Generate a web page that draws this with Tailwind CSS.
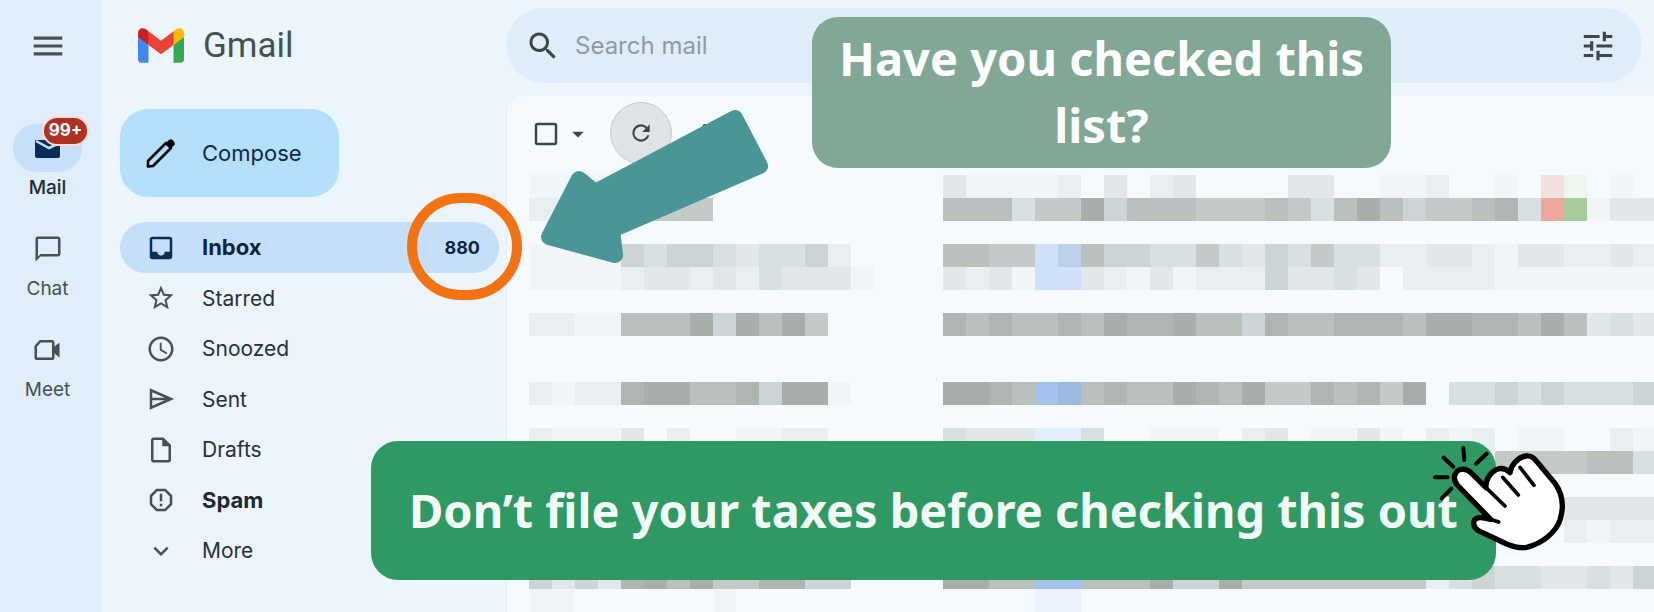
<!DOCTYPE html>
<html lang="en">
<head>
  <meta charset="UTF-8" />
  <title>Gmail</title>
  <script src="https://cdn.jsdelivr.net/npm/@tailwindcss/browser@4"></script>
</head>
<body class="w-[1654px] h-[612px] overflow-hidden bg-[#ecf4fc] font-['Inter',sans-serif] relative">
  <div class="flex h-full">
    <!-- App rail -->
    <aside class="w-[101px] shrink-0 bg-[#e0edfb] flex flex-col items-center pr-[6px]">
      <svg class="mt-[27px] mb-[59px] w-[38px] h-[38px] fill-[#46524f]" viewBox="0 0 24 24"><path d="M3 18h18v-2H3v2zm0-5h18v-2H3v2zm0-7v2h18V6H3z"/></svg>
      <div class="h-[101px] flex flex-col items-center">
        <div class="relative w-[69px] h-[48px] rounded-full bg-[#c6e0fb] flex items-center justify-center">
          <svg class="w-[25px] h-[20px]" viewBox="0 0 25 20"><path fill="#062e56" d="M0 2h25v16a2 2 0 0 1-2 2H2a2 2 0 0 1-2-2z"/><path fill="none" stroke="#c6e0fb" stroke-width="2.5" d="M1 3l13 7 11-5"/></svg>
          <span class="absolute left-[31px] top-[-6px] w-[43px] h-[26px] rounded-full bg-[#ab3224] ring-2 ring-[#f9dcd7] text-white text-[17px] font-bold flex items-center justify-center">99+</span>
        </div>
        <span class="mt-[2px] h-[28px] leading-[28px] text-[19px] font-medium text-[#1c2b33]">Mail</span>
      </div>
      <div class="h-[101px] flex flex-col items-center">
        <div class="h-[48px] flex items-center"><svg class="w-[30px] h-[30px] fill-[#46524f]" viewBox="0 0 24 24"><path d="M20 2H4c-1.100 0-2 .9-2 2v18l4-4h14c1.100 0 2-.9 2-2V4c0-1.100-.9-2-2-2zm0 14H6l-2 2V4h16v12z"/></svg></div>
        <span class="mt-[2px] h-[28px] leading-[28px] text-[19px] text-[#46524f]">Chat</span>
      </div>
      <div class="h-[101px] flex flex-col items-center">
        <div class="h-[48px] flex items-center"><svg class="w-[30px] h-[30px]" viewBox="0 0 24 24"><path fill="none" stroke="#46524f" stroke-width="2" stroke-linejoin="round" d="M6.500 5H16a1 1 0 0 1 1 1v12a1 1 0 0 1-1 1H4a1 1 0 0 1-1-1V9z"/><path fill="#46524f" d="M17 10l5-4v12l-5-4z"/></svg></div>
        <span class="mt-[2px] h-[28px] leading-[28px] text-[19px] text-[#46524f]">Meet</span>
      </div>
    </aside>

    <!-- Labels column -->
    <nav class="w-[405px] shrink-0 pl-[19px]">
      <div class="mt-[28px] ml-[18px] h-[35px] flex items-center gap-[19px]">
        <svg class="w-[46px] h-[35px]" viewBox="0 0 256 193">
          <path fill="#4285F4" d="M58.182 192.05V93.14L27.507 65.077 0 49.504v125.091c0 9.658 7.825 17.455 17.455 17.455h40.727Z"/>
          <path fill="#34A853" d="M197.818 192.05h40.727c9.659 0 17.455-7.826 17.455-17.455V49.505l-31.156 17.837-27.026 25.798v98.91Z"/>
          <path fill="#EA4335" d="m58.182 93.14-4.174-38.647 4.174-36.989L128 69.868l69.818-52.364 4.669 34.992-4.669 40.644L128 145.504z"/>
          <path fill="#FBBC04" d="M197.818 17.504V93.14L256 49.504V26.231c0-21.585-24.64-33.89-41.89-20.945l-16.292 12.218Z"/>
          <path fill="#C5221F" d="M0 49.504l26.759 20.07L58.182 93.14V17.504L41.89 5.286C24.61-7.66 0 4.646 0 26.23v23.273Z"/>
        </svg>
        <span class="text-[35px] text-[#46524f] leading-none font-['Roboto',sans-serif]">Gmail</span>
      </div>

      <button class="mt-[46px] w-[219px] h-[88px] rounded-[28px] bg-[#b4e0fd] flex items-center pl-[26px] gap-[26px]">
        <svg class="w-[30px] h-[30px]" viewBox="0 0 30 30"><path fill="none" stroke="#000" stroke-width="2.6" stroke-linejoin="round" d="M2 23L20 5l5 5L7 28l-5 .5z"/><path d="M20 5l3-3q2-1.500 4 .5l1 1q1.500 2 0 4l-3 2.500z"/></svg>
        <span class="text-[22px] text-[#0f2a3f]">Compose</span>
      </button>

      <ul class="mt-[25px] w-[379px] text-[21px] text-[#253238]">
        <li class="h-[51px] rounded-full bg-[#c5dffa] flex items-center pl-[26px] pr-[19px] gap-[26px] text-[22px] font-bold text-[#0a2540]">
          <svg class="w-[30px] h-[30px] fill-[#062e56]" viewBox="0 0 24 24"><path d="M19 3H5c-1.100 0-2 .9-2 2v14c0 1.100.9 2 2 2h14c1.100 0 2-.9 2-2V5c0-1.100-.9-2-2-2zm0 12h-4c0 1.660-1.340 3-3 3s-3-1.340-3-3H5V5h14v10z"/></svg>
          <span>Inbox</span>
          <span class="ml-auto text-[18px]">880</span>
        </li>
        <li class="h-[50.500px] flex items-center pl-[26px] gap-[26px]">
          <svg class="w-[30px] h-[30px] fill-[#46524f]" viewBox="0 0 24 24"><path d="M22 9.240l-7.190-.62L12 2 9.190 8.630 2 9.240l5.460 4.730L5.820 21 12 17.270 18.180 21l-1.630-7.030L22 9.240zM12 15.400l-3.760 2.270 1-4.280-3.320-2.880 4.380-.38L12 6.100l1.710 4.040 4.380.38-3.320 2.880 1 4.280L12 15.400z"/></svg>
          <span>Starred</span>
        </li>
        <li class="h-[50.500px] flex items-center pl-[26px] gap-[26px]">
          <svg class="w-[30px] h-[30px] fill-[#46524f]" viewBox="0 0 24 24"><path d="M11.990 2C6.470 2 2 6.480 2 12s4.470 10 9.990 10C17.520 22 22 17.520 22 12S17.520 2 11.990 2zM12 20c-4.420 0-8-3.580-8-8s3.580-8 8-8 8 3.580 8 8-3.580 8-8 8zm.5-13H11v6l5.250 3.150.75-1.230-4.500-2.670z"/></svg>
          <span>Snoozed</span>
        </li>
        <li class="h-[50.500px] flex items-center pl-[26px] gap-[26px]">
          <svg class="w-[30px] h-[30px]" viewBox="0 0 24 24"><path fill="none" stroke="#46524f" stroke-width="2" d="M4 5l16 7-16 7zM4 12h15"/></svg>
          <span>Sent</span>
        </li>
        <li class="h-[50.500px] flex items-center pl-[26px] gap-[26px]">
          <svg class="w-[30px] h-[30px] fill-[#46524f]" viewBox="0 0 24 24"><path d="M14 2H6c-1.100 0-2 .9-2 2v16c0 1.100.9 2 2 2h12c1.100 0 2-.9 2-2V8l-6-6zm4 18H6V4h7v5h5v11z"/></svg>
          <span>Drafts</span>
        </li>
        <li class="h-[50.500px] flex items-center pl-[26px] gap-[26px] text-[22px] font-bold text-[#1c2b33]">
          <svg class="w-[30px] h-[30px] fill-[#46524f]" viewBox="0 0 24 24"><path d="M15.730 3H8.270L3 8.270v7.460L8.270 21h7.460L21 15.730V8.270L15.730 3zM19 14.900L14.900 19H9.100L5 14.900V9.100L9.100 5h5.800L19 9.100v5.800z"/><path d="M11 7h2v6h-2zM11 15h2v2h-2z"/></svg>
          <span>Spam</span>
        </li>
        <li class="h-[50.500px] flex items-center pl-[26px] gap-[26px]">
          <svg class="w-[30px] h-[30px] fill-[#46524f]" viewBox="0 0 24 24"><path d="M7.410 8.590L12 13.170l4.590-4.580L18 10l-6 6-6-6 1.410-1.410z"/></svg>
          <span>More</span>
        </li>
      </ul>
    </nav>

    <!-- Main -->
    <main class="flex-1 min-w-0 flex flex-col">
      <div class="mt-[8px] h-[75px] w-[1136px] rounded-full bg-[#dfedfb] flex items-center pl-[19px] pr-[25px]">
        <svg class="w-[36px] h-[36px] fill-[#3c4846]" viewBox="0 0 24 24"><path d="M15.500 14h-.79l-.28-.27C15.410 12.590 16 11.110 16 9.500 16 5.910 13.090 3 9.500 3S3 5.910 3 9.500 5.910 16 9.500 16c1.610 0 3.090-.59 4.230-1.570l.27.28v.79l5 4.990L20.490 19l-4.990-5zm-6 0C7.010 14 5 11.990 5 9.500S7.010 5 9.500 5 14 7.010 14 9.500 11.990 14 9.500 14z"/></svg>
        <span class="ml-[14px] text-[24px] text-[#8e9ba0]">Search mail</span>
        <svg class="ml-auto w-[38px] h-[38px] fill-[#3c4846]" viewBox="0 0 24 24"><path d="M3 17v2h6v-2H3zM3 5v2h10V5H3zm10 16v-2h8v-2h-8v-2h-2v6h2zM7 9v2H3v2h4v2h2V9H7zm14 4v-2H11v2h10zm-6-4h2V7h4V5h-4V3h-2v6z"/></svg>
      </div>

      <section class="mt-[13px] flex-1 min-h-0 rounded-tl-2xl bg-[#f5fafe] border-l border-[#e6eef4] pl-[22px] overflow-hidden">
        <div class="h-[79px] flex items-center ml-[3px]">
          <svg class="w-[30px] h-[30px] -ml-[1px] mt-[-4px] fill-[#3c4846]" viewBox="0 0 24 24"><path d="M19 5v14H5V5h14m0-2H5c-1.100 0-2 .9-2 2v14c0 1.100.9 2 2 2h14c1.100 0 2-.9 2-2V5c0-1.100-.9-2-2-2z"/></svg>
          <svg class="ml-[3px] mt-[-4px] w-[28px] h-[28px] fill-[#3c4846]" viewBox="0 0 24 24"><path d="M7 10l5 5 5-5z"/></svg>
          <div class="ml-[18px] mt-[-5px] w-[62px] h-[62px] rounded-full bg-[#e0e4e6] border border-[#c4cbcc] flex items-center justify-center">
            <svg class="w-[26px] h-[26px] fill-[#3c4846]" viewBox="0 0 24 24"><path d="M17.650 6.350A7.958 7.958 0 0 0 12 4a8 8 0 1 0 7.730 10h-2.080A6 6 0 1 1 12 6c1.660 0 3.140.69 4.220 1.780L13 11h7V4l-2.350 2.350z"/></svg>
          </div>
          <svg class="ml-[18px] mt-[-4px] w-[30px] h-[30px] fill-[#3c4846]" viewBox="0 0 24 24"><circle cx="12" cy="6" r="2"/><circle cx="12" cy="12" r="2"/><circle cx="12" cy="18" r="2"/></svg>
        </div>
        <!-- pixelated message rows, filled in below -->
        <div id="mosaic" class="grid grid-cols-[repeat(49,23px)] auto-rows-[23px]"></div>
      </section>
    </main>
  </div>

  <!-- Overlays on top of the screenshot -->
  <div class="absolute left-[407px] top-[193px] w-[115px] h-[107px] rounded-full border-[10px] border-[#f37313]"></div>

  <svg class="absolute left-[530px] top-[100px] w-[250px] h-[170px]" viewBox="530 100 250 170">
    <path fill="#4a9596" stroke="#4a9596" stroke-width="16" stroke-linejoin="round" d="M579 179L595 192 735 118 760 166 612 230 615 255 549 237Z"/>
  </svg>

  <div class="absolute left-[812px] top-[17px] w-[579px] h-[151px] rounded-[26px] bg-[#81a895] text-white text-center text-[47px] leading-[67px] font-bold font-['Noto_Sans',sans-serif] pt-[8px] px-[20px]">Have you checked this list?</div>

  <div class="absolute left-[371px] top-[441px] w-[1125px] h-[139px] rounded-[27px] bg-[#2e9963] text-[#f2fbf6] text-[46.900px] font-bold font-['Noto_Sans',sans-serif] flex items-center pl-[38px] whitespace-nowrap">Don’t file your taxes before checking this out</div>

  <svg class="absolute left-[1400px] top-[420px] w-[190px] h-[140px]" viewBox="0 0 570 420">
    <path fill="#fff" stroke="#000" stroke-width="16" stroke-linejoin="round" d="M272 298L172 195C155 175 165 150 185 148C197 146 207 152 215 160L258 203C256 180 272 152 298 146C312 144 322 150 330 158C332 138 352 112 378 108C392 106 402 114 410 124L465 190C488 222 492 262 480 300C468 335 430 370 380 382C360 386 340 380 320 372L235 332C218 322 216 300 232 294C244 290 258 294 272 298Z"/>
    <path fill="none" stroke="#000" stroke-width="11" stroke-linecap="round" d="M258 203L315 258M308 172L355 225M360 142L402 196M272 298L296 306"/>
    <path fill="none" stroke="#000" stroke-width="12" stroke-linecap="round" d="M190 84l3 36M131 113l29 27M105 172h38M125 235l29-29M228 131l32-30"/>
  </svg>

  <script>
    const shades = {
      '1': '#f0f5f8', '2': '#e9eef1', '3': '#e2e8ea', '4': '#d9e0e2', '5': '#cdd4d5',
      '6': '#c3cac8', '7': '#bac1bd', '8': '#afb6b1', '9': '#a8aea9',
      b: '#d0e0f8', c: '#bcd0ea', d: '#a4c2ee', e: '#9cb9e4', f: '#e4eefb', i: '#eaf2fc',
      p: '#f5e0e0', r: '#eda79c', g: '#a6cd99', h: '#eef6f0'
    };
    // one string per 23px row, one character per 23px column
    const rows = [
      '1111..............31' + '1112.3.23....33..112' + '..1.ph.1.',
      '22226666..........77' + '74669577766676479756' + '6784rg133',
      '',
      '11115455434452....77' + '66bc7554464354644223' + '321332232',
      '111123323243331...32' + '31bb3213122253343.22' + '221111111',
      '',
      '2211777959796.....87' + '87787988977587788879' + '988797343',
      '',
      '',
      '21228997785991....99' + '87de787798796687869.' + '445454445',
      '',
      '21113.2..1122.....43' + '33ff4..111.23.1131.2' + '12.11..21',
      '....................' + '......................' + '6666774',
      '',
      '....................' + '......................' + '3333333',
      '....................' + '.........................' + '2122',
      '',
      '53538979668855....99' + '77dd7779559666666662' + '454433435',
      '11......1.............ii'
    ];
    const mosaic = document.getElementById('mosaic');
    rows.forEach(row => {
      for (let col = 0; col < 49; col++) {
        const cell = document.createElement('div');
        const shade = shades[row[col]];
        if (shade) cell.style.background = shade;
        mosaic.appendChild(cell);
      }
    });
  </script>
</body>
</html>
